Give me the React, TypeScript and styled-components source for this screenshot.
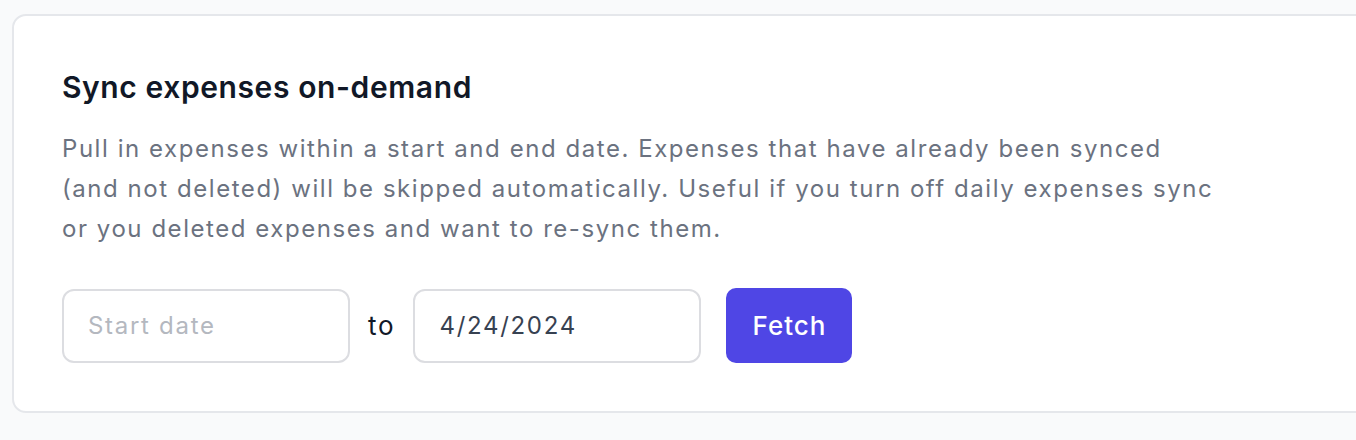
import styled, { createGlobalStyle } from 'styled-components';

const GlobalStyle = createGlobalStyle`
  * {
    box-sizing: border-box;
  }

  body {
    margin: 0;
    background: #f9fafb;
    font-family: Inter, "Noto Sans", sans-serif;
    -webkit-font-smoothing: antialiased;
  }
`;

const Page = styled.div`
  padding: 14px 0 0 12px;
  height: 440px;
  overflow: hidden;
`;

const Card = styled.section`
  width: 1400px;
  height: 399px;
  background: #ffffff;
  border: 2px solid #e5e7eb;
  border-radius: 14px;
  padding: 53px 48px 0 48px;
`;

const Title = styled.h3`
  margin: 0;
  font-size: 30px;
  line-height: 36px;
  font-weight: 600;
  letter-spacing: 0.6px;
  color: #111827;
`;

const Description = styled.p`
  margin: 24px 0 0 0;
  font-size: 24px;
  line-height: 40px;
  letter-spacing: 1.55px;
  color: #6b7280;
  white-space: nowrap;
`;

const Form = styled.div`
  display: flex;
  align-items: center;
  gap: 18px;
  margin-top: 39px;
`;

const DateInput = styled.input`
  width: 288px;
  height: 74px;
  border: 2px solid #dcdde1;
  border-radius: 12px;
  padding: 0 24px;
  font-family: inherit;
  font-size: 24px;
  letter-spacing: 1.7px;
  color: #374151;
  background: #ffffff;
  outline: none;

  &::placeholder {
    color: #b4b8bf;
  }
`;

const Separator = styled.span`
  font-size: 26px;
  letter-spacing: 1.8px;
  color: #111827;
`;

const FetchButton = styled.button`
  margin-left: 7px;
  height: 75px;
  width: 126px;
  padding: 0;
  border: none;
  border-radius: 10px;
  background: #4f46e5;
  color: #ffffff;
  font-family: inherit;
  font-size: 26px;
  font-weight: 500;
  letter-spacing: 1px;
  cursor: pointer;
`;

export default function App() {
  return (
    <>
      <GlobalStyle />
      <Page>
        <Card>
          <Title>Sync expenses on-demand</Title>
          <Description>
            Pull in expenses within a start and end date. Expenses that have already been synced
            <br />
            (and not deleted) will be skipped automatically. Useful if you turn off daily expenses sync
            <br />
            or you deleted expenses and want to re-sync them.
          </Description>
          <Form>
            <DateInput type="text" placeholder="Start date" />
            <Separator>to</Separator>
            <DateInput type="text" defaultValue="4/24/2024" />
            <FetchButton>Fetch</FetchButton>
          </Form>
        </Card>
      </Page>
    </>
  );
}
